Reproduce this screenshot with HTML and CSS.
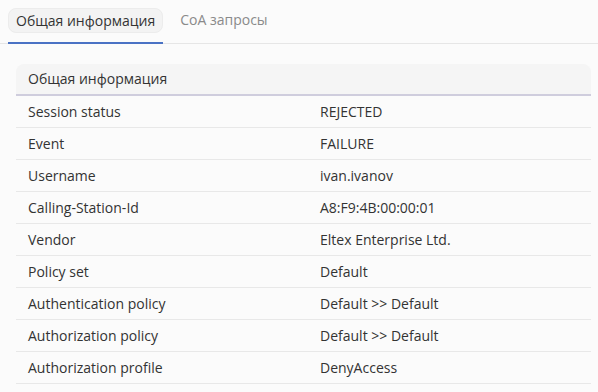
FILE: index.html
```html
<!DOCTYPE html>
<html lang="ru">
<head>
    <meta charset="UTF-8">
    <title>Session</title>
    <link rel="stylesheet" href="styles.css">
</head>
<body>
    <div class="tabs">
        <div class="tab tab_ativa"><span class="tab_pill">Общая информация</span></div>
        <div class="tab"><span class="tab_pill">CoA запросы</span></div>
    </div>
    <div class="cartao">
        <div class="cartao_titulo">Общая информация</div>
        <div class="linha"><span class="chave">Session status</span><span class="valor">REJECTED</span></div>
        <div class="linha"><span class="chave">Event</span><span class="valor">FAILURE</span></div>
        <div class="linha"><span class="chave">Username</span><span class="valor">ivan.ivanov</span></div>
        <div class="linha"><span class="chave">Calling-Station-Id</span><span class="valor">A8:F9:4B:00:00:01</span></div>
        <div class="linha"><span class="chave">Vendor</span><span class="valor">Eltex Enterprise Ltd.</span></div>
        <div class="linha"><span class="chave">Policy set</span><span class="valor">Default</span></div>
        <div class="linha"><span class="chave">Authentication policy</span><span class="valor">Default &gt;&gt; Default</span></div>
        <div class="linha"><span class="chave">Authorization policy</span><span class="valor">Default &gt;&gt; Default</span></div>
        <div class="linha"><span class="chave">Authorization profile</span><span class="valor">DenyAccess</span></div>
    </div>
</body>
</html>
```

FILE: styles.css
```css
*{
    padding: 0px;
    margin: 0px;
    box-sizing: border-box;
}
body{
    background-color: #fbfbfb;
    font-family: "Open Sans", "Noto Sans", sans-serif;
    font-size: 14px;
    color: #333;
}
.tabs{
    display: flex;
    align-items: flex-end;
    height: 44px;
    padding: 0px 8px;
    border-bottom: 1px solid #e6e6e6;
    gap: 9px;
}
.tab{
    height: 44px;
    padding-top: 8px;
    color: #8a8a8a;
}
.tab_pill{
    display: block;
    height: 25px;
    line-height: 23px;
    padding: 0px 7px;
    border: 1px solid transparent;
    border-radius: 8px;
}
.tab_ativa{
    color: #333;
    border-bottom: 2px solid #4a72c4;
    margin-bottom: -1px;
}
.tab_ativa .tab_pill{
    background-color: #f3f3f3;
    border-color: #ececec;
}
.cartao{
    margin: 20px 7px 0px 16px;
}
.cartao_titulo{
    height: 32px;
    line-height: 30px;
    padding: 0px 12px;
    background-color: #f5f5f5;
    border-radius: 8px 8px 0px 0px;
    border-bottom: 2px solid #cfcddd;
}
.linha{
    display: grid;
    grid-template-columns: 292px 1fr;
    height: 32px;
    line-height: 31px;
    border-bottom: 1px solid #e8e8e8;
}
.chave{
    padding-left: 12px;
}
.valor{
    padding-left: 12px;
}
```
